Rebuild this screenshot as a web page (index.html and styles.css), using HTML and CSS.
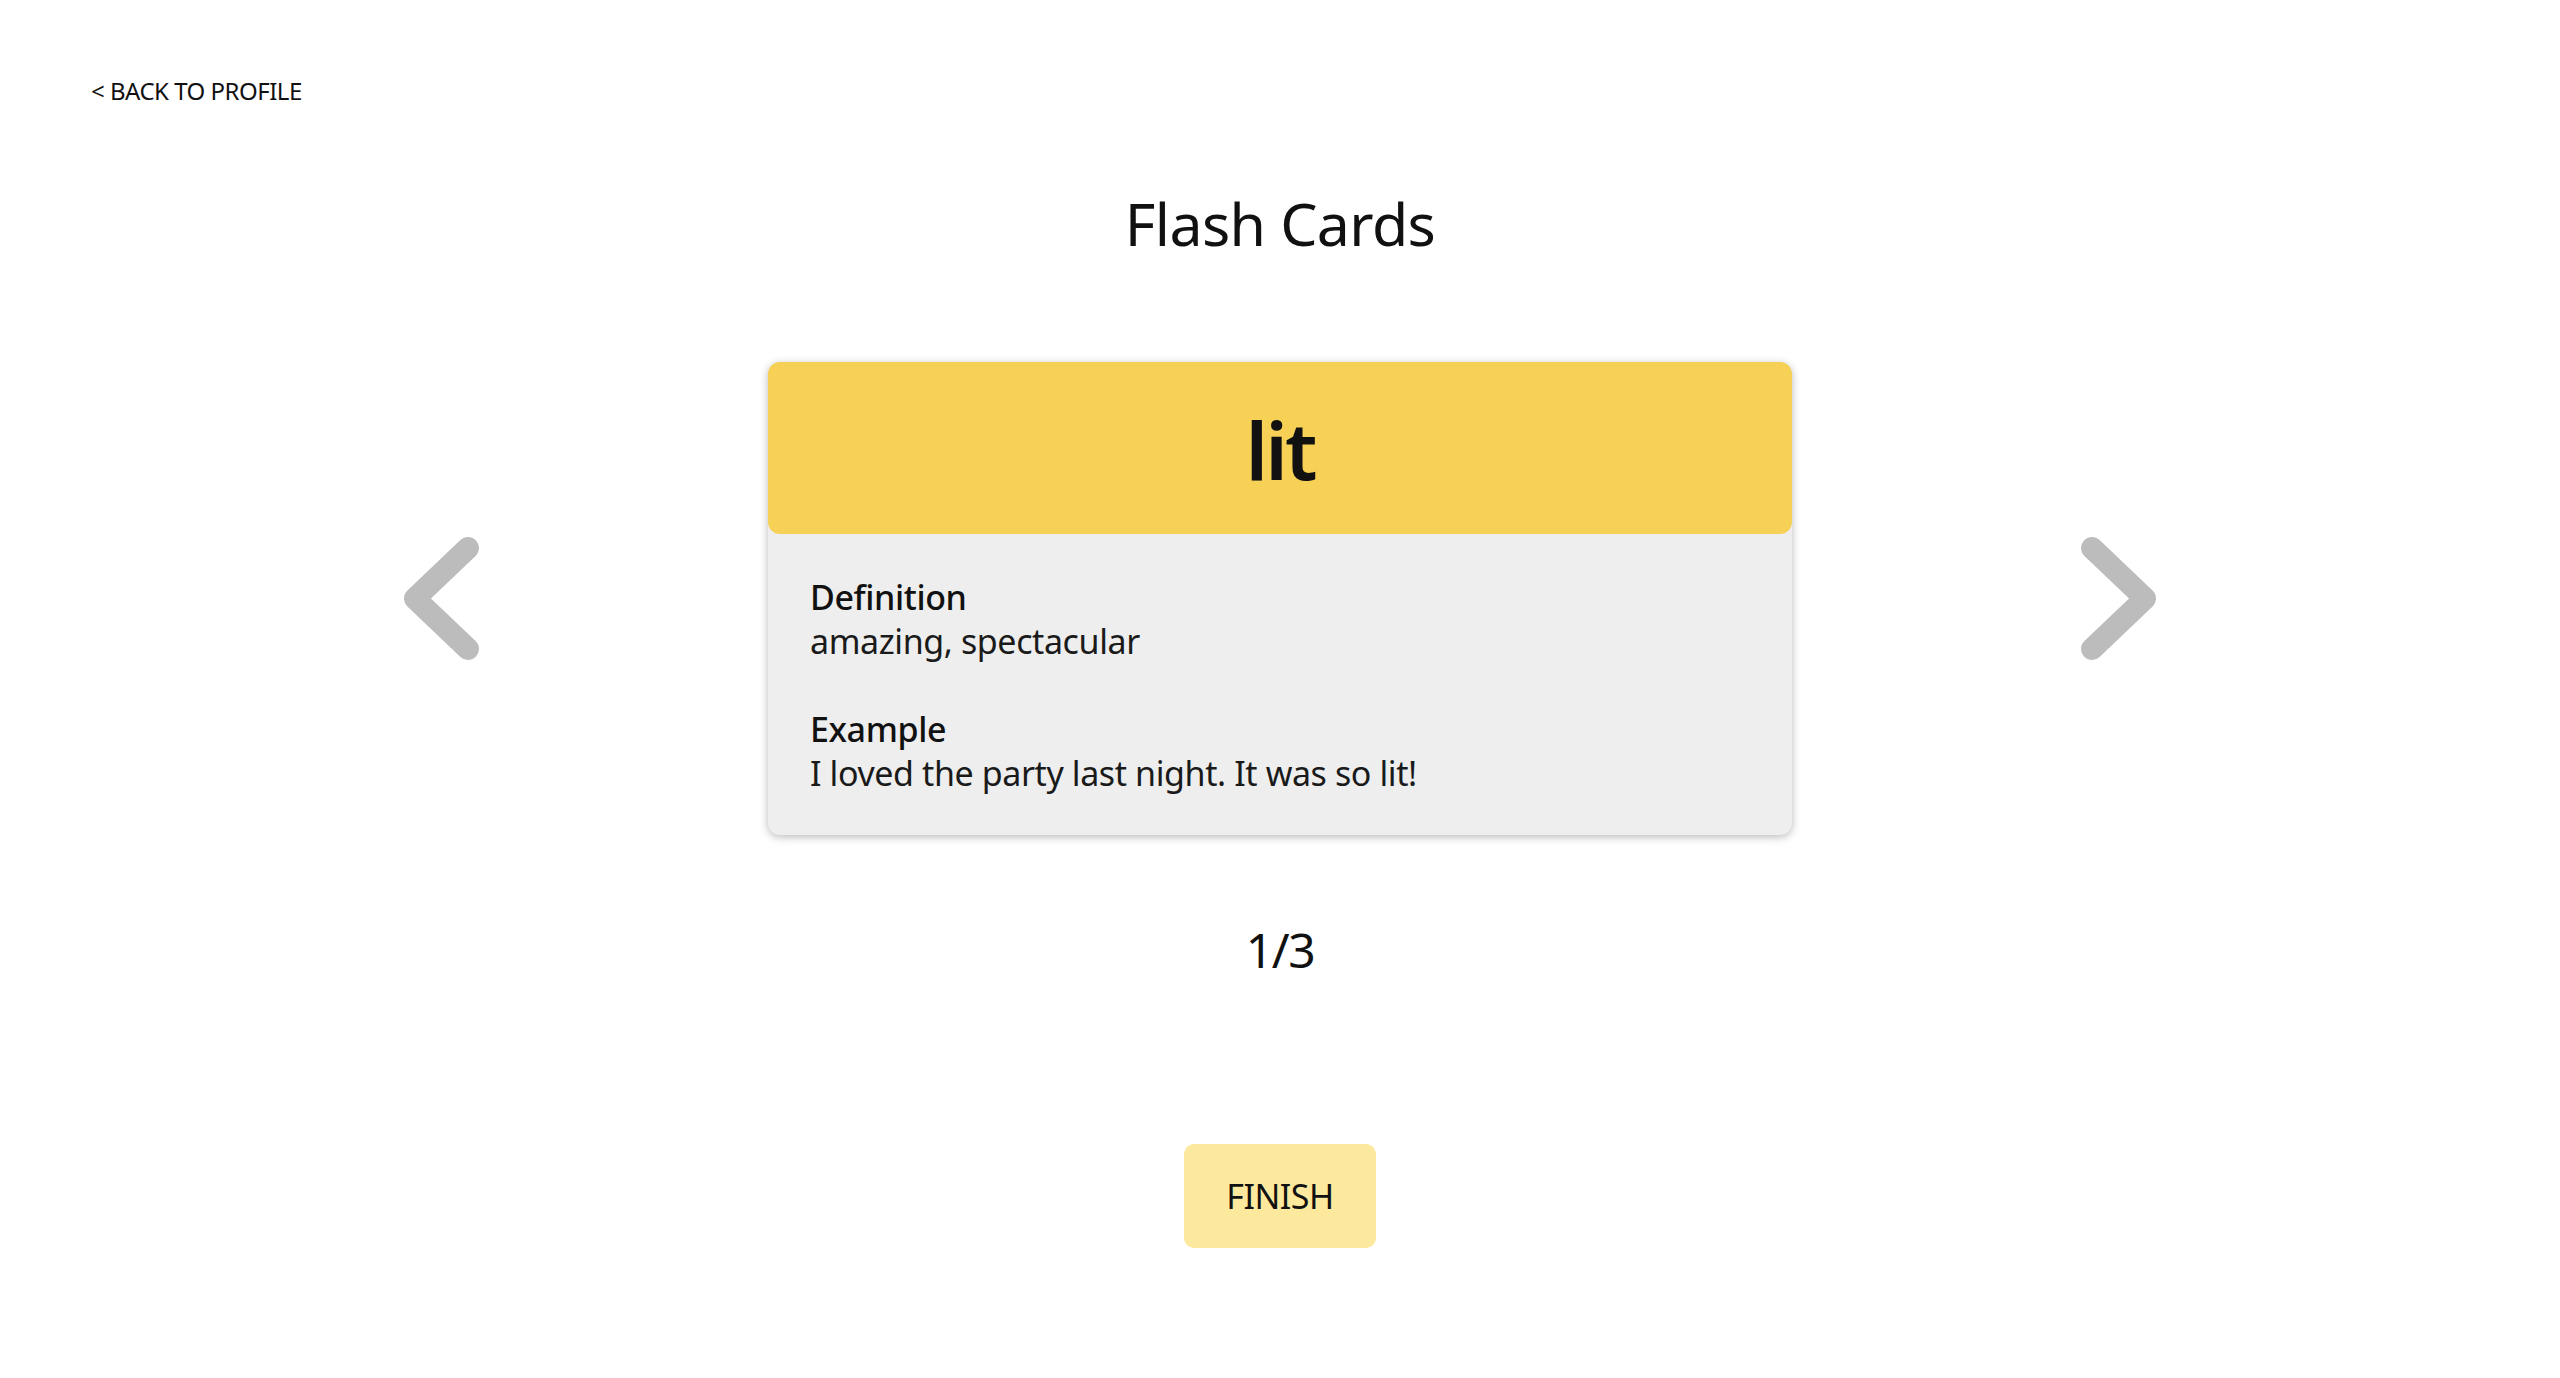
FILE: index.html
```html
<!DOCTYPE html>
<html lang="en">
<head>
<meta charset="utf-8">
<title>Flash Cards</title>
<link rel="stylesheet" href="styles.css">
</head>
<body>
<header class="topbar">
  <a class="back-link" href="#">&lt; BACK TO PROFILE</a>
</header>
<main class="page">
  <h1 class="title">Flash Cards</h1>
  <section class="deck">
    <button class="nav-arrow" aria-label="Previous card">
      <svg width="75" height="123" viewBox="0 0 75 123"><polyline points="64,11 11,61.5 64,112" fill="none" stroke="#bcbcbc" stroke-width="22" stroke-linecap="round" stroke-linejoin="round"/></svg>
    </button>
    <article class="card">
      <div class="card-head">lit</div>
      <div class="card-body">
        <div class="field">
          <div class="field-label">Definition</div>
          <div class="field-value">amazing, spectacular</div>
        </div>
        <div class="field">
          <div class="field-label">Example</div>
          <div class="field-value">I loved the party last night. It was so lit!</div>
        </div>
      </div>
    </article>
    <button class="nav-arrow" aria-label="Next card">
      <svg width="75" height="123" viewBox="0 0 75 123"><polyline points="11,11 64,61.5 11,112" fill="none" stroke="#bcbcbc" stroke-width="22" stroke-linecap="round" stroke-linejoin="round"/></svg>
    </button>
  </section>
  <div class="counter">1/3</div>
  <button class="finish">FINISH</button>
</main>
</body>
</html>
```

FILE: styles.css
```css
html, body {
  margin: 0;
  padding: 0;
  background: #ffffff;
}

body {
  font-family: "Noto Sans", "Open Sans", sans-serif;
  color: #111111;
}

.topbar {
  padding: 75px 0 0 91px;
}

.back-link {
  display: inline-block;
  font-size: 24px;
  line-height: 32px;
  color: #111111;
  text-decoration: none;
  letter-spacing: -0.5px;
}

.page {
  display: flex;
  flex-direction: column;
  align-items: center;
}

.title {
  margin: 80px 0 0 0;
  font-size: 59px;
  line-height: 72px;
  font-weight: 400;
  letter-spacing: -0.6px;
}

.deck {
  margin-top: 103px;
  display: flex;
  align-items: center;
  gap: 289px;
}

.nav-arrow {
  border: 0;
  padding: 0;
  background: transparent;
  display: flex;
  cursor: pointer;
}

.card {
  width: 1024px;
  background: #eeeeee;
  border-radius: 12px;
  box-shadow: 0 2px 8px rgba(0, 0, 0, 0.28);
  display: flex;
  flex-direction: column;
}

.card-head {
  height: 172px;
  background: #f6d155;
  border-radius: 12px;
  display: flex;
  align-items: center;
  justify-content: center;
  font-size: 80px;
  font-weight: 600;
  letter-spacing: -3px;
  color: #111111;
}

.card-body {
  padding: 41px 42px 40px 42px;
  display: flex;
  flex-direction: column;
  gap: 44px;
}

.field-label,
.field-value {
  font-size: 34px;
  line-height: 44px;
  letter-spacing: -0.4px;
}

.field-label {
  font-weight: 500;
  color: #111111;
}

.field-value {
  font-weight: 400;
  color: #1a1a1a;
}

.counter {
  margin-top: 85px;
  font-size: 48px;
  line-height: 60px;
  letter-spacing: -1.5px;
}

.finish {
  margin-top: 164px;
  width: 192px;
  height: 104px;
  border: 0;
  border-radius: 10px;
  background: #fde99d;
  font-family: "Noto Sans", "Open Sans", sans-serif;
  font-size: 34px;
  color: #111111;
  letter-spacing: -0.5px;
  cursor: pointer;
}
```
